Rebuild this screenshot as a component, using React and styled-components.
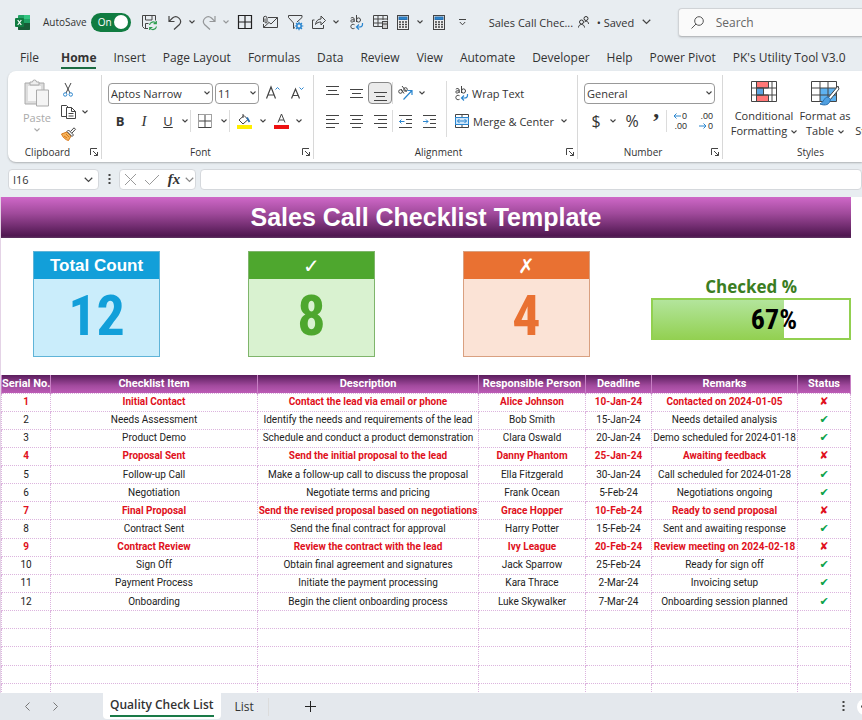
import React from 'react';
import styled, { createGlobalStyle } from 'styled-components';

const GlobalStyle = createGlobalStyle`
  * { box-sizing: border-box; }
  body {
    margin: 0;
    font-family: "Open Sans", "Noto Sans", sans-serif;
    font-size: 12px;
    color: #333;
    background: #e8edf1;
  }
  button, input, select { font: inherit; color: inherit; }
`;

const Page = styled.div`
  height: 100vh;
  display: flex;
  flex-direction: column;
  overflow: hidden;
`;
const Svg = styled.svg`
  display: block;
  flex: none;
  fill: none;
  stroke: ${props => props.$color || '#444'};
  stroke-width: 1;
  overflow: visible;
`;
const Tool = styled.button`
  width: ${props => props.$w || 24}px;
  height: ${props => props.$h || 24}px;
  flex: none;
  padding: 0;
  border: 0;
  background: none;
  display: flex;
  align-items: center;
  justify-content: center;
  &:disabled { opacity: .5; }
`;

/* title bar */
const TitleBar = styled.header`
  height: 44px;
  flex: none;
  display: flex;
  align-items: center;
  padding-left: 15px;
  white-space: nowrap;
`;
const AutoSave = styled.label`
  flex: none;
  display: flex;
  align-items: center;
  gap: 4px;
  margin-left: 13px;
  font-size: 10px;
`;
const Toggle = styled.span`
  width: 40px;
  height: 19px;
  border-radius: 10px;
  background: #107c41;
  color: #fff;
  display: flex;
  align-items: center;
  justify-content: space-between;
  padding: 0 3px 0 7px;
  input {
    appearance: none;
    width: 14px;
    height: 14px;
    margin: 0;
    border-radius: 50%;
    background: #fff;
  }
`;
const QuickAccess = styled.div`
  flex: none;
  display: flex;
  align-items: center;
  margin-left: 6px;
`;
const DocName = styled.div`
  width: 89px;
  flex: none;
  margin-left: 16px;
  font-size: 11px;
`;
const SavedButton = styled.button`
  width: 100px;
  flex: none;
  display: flex;
  align-items: center;
  gap: 8px;
  padding: 0;
  border: 0;
  background: none;
  font-size: 11px;
`;
const SearchBox = styled.label`
  flex: 1;
  min-width: 0;
  height: 29px;
  display: flex;
  align-items: center;
  gap: 12px;
  padding-left: 12px;
  background: #fafafa;
  border: 1px solid #d0d3d6;
  border-bottom-color: #b8bbbe;
  border-right: 0;
  border-radius: 4px 0 0 4px;
  box-shadow: 0 1px 2px rgba(0, 0, 0, .12);
  input {
    width: 100%;
    border: 0;
    background: none;
    padding: 0;
  }
  input::placeholder { color: #666; opacity: 1; }
`;

/* ribbon */
const Tabs = styled.nav`
  height: 27px;
  flex: none;
  display: flex;
  align-items: flex-end;
  gap: 17px;
  padding: 0 0 2px 20px;
  white-space: nowrap;
`;
const Tab = styled.a`
  color: #333;
  text-decoration: none;
  line-height: 18px;
  border-bottom: 2px solid ${props => props.$active ? '#1a6b41' : 'transparent'};
  font-weight: ${props => props.$active ? 700 : 400};
  &:first-child { margin-right: 5px; }
`;
const RibbonBody = styled.section`
  flex: none;
  height: 91px;
  margin-left: 8px;
  display: flex;
  background: #fff;
  border-radius: 8px 0 0 8px;
  box-shadow: 0 1px 2px rgba(0, 0, 0, .25);
  overflow: hidden;
`;
const Group = styled.div`
  flex: none;
  width: ${props => props.$w}px;
  display: flex;
  flex-direction: column;
  border-right: 1px solid #d8d8d8;
  margin: 4px 0 3px;
`;
const GroupBody = styled.div`
  flex: 1;
  display: flex;
  padding: ${props => props.$top}px 0 0 ${props => props.$left}px;
`;
const Rows = styled.div`
  display: flex;
  flex-direction: column;
  gap: 4px;
  ${props => props.$grow && 'flex: 1;'}
  ${props => props.$w && `width: ${props.$w}px; padding-left: 8px;`}
`;
const Row = styled.div`
  display: flex;
  align-items: center;
  height: 24px;
  white-space: nowrap;
`;
const GroupFooter = styled.div`
  display: flex;
  align-items: center;
  height: 14px;
  font-size: 10px;
  span { flex: 1; text-align: center; }
`;
const Divider = styled.div`
  width: 1px;
  flex: none;
  height: ${props => props.$h || 22}px;
  background: #dcdcdc;
`;
const SelectWrap = styled.div`
  position: relative;
  flex: none;
  width: ${props => props.$w}px;
  margin-right: 2px;
  select {
    display: block;
    appearance: none;
    width: 100%;
    height: 21px;
    padding: 0 2px;
    border: 1px solid #999;
    border-radius: 4px;
    background: #fff;
    font-size: 11px;
  }
  svg {
    position: absolute;
    right: 3px;
    top: 8px;
    pointer-events: none;
  }
`;
const Glyph = styled.span`
  font-size: ${props => props.$size || 13}px;
  font-weight: ${props => props.$bold ? 700 : 400};
  font-style: ${props => props.$italic ? 'italic' : 'normal'};
  font-family: ${props => props.$serif ? '"Liberation Serif", serif' : 'inherit'};
  text-decoration: ${props => props.$underline ? 'underline' : 'none'};
  line-height: 1;
`;
const AlignButton = styled(Tool)`
  height: 22px;
  border: 1px solid ${props => props.$on ? '#888' : 'transparent'};
  border-radius: 4px;
  background: ${props => props.$on ? '#ebebeb' : 'none'};
`;
const TextButton = styled.button`
  display: flex;
  align-items: center;
  gap: 4px;
  padding: 0;
  border: 0;
  background: none;
  font-size: 11px;
  height: 24px;
`;
const BigButton = styled.button`
  width: ${props => props.$w}px;
  flex: none;
  display: flex;
  flex-direction: column;
  align-items: center;
  gap: 3px;
  padding: 0;
  border: 0;
  background: none;
  font-size: 11px;
  line-height: 15px;
  color: ${props => props.$dim ? '#aaa' : '#333'};
  white-space: nowrap;
  span svg {
    display: inline-block;
    margin-left: 4px;
    vertical-align: middle;
  }
`;
const BigIcon = styled.div`
  height: 24px;
`;
const ClipboardTools = styled.div`
  display: flex;
  flex-direction: column;
`;
const ClipboardRow = styled.div`
  display: flex;
  align-items: center;
  height: 22px;
`;
const Digits = styled.span`
  display: grid;
  justify-items: end;
  font: 9px/10px "Liberation Sans", Arial, sans-serif;
  span { display: flex; align-items: center; gap: 1px; }
`;

/* formula bar */
const FormulaBar = styled.div`
  flex: none;
  height: 35px;
  display: flex;
  align-items: center;
  padding-left: 8px;
`;
const Field = styled.div`
  height: 21px;
  min-width: 0;
  flex: ${props => props.$w ? `0 0 ${props.$w}px` : 1};
  display: flex;
  align-items: center;
  background: #fff;
  border: 1px solid #d5d8dc;
  border-radius: 4px;
  margin-left: ${props => props.$w ? 0 : 4}px;
  input {
    flex: 1;
    width: 0;
    min-width: 0;
    border: 0;
    background: none;
    padding: 0 4px;
    font-size: 11px;
  }
`;

/* sheet */
const Sheet = styled.main`
  flex: 1;
  min-height: 0;
  overflow: hidden;
  background: #fff;
  border-left: 1px solid #e4d3e6;
  padding-right: 11px;
`;
const Banner = styled.h1`
  margin: 0;
  text-align: center;
  color: #fff;
  font: bold 25px/41px "Liberation Sans", Arial, sans-serif;
  background: linear-gradient(#cf68c8, #a04a9b 40%, #4f1750 95%, #5f3562);
`;
const Summary = styled.div`
  display: flex;
  justify-content: space-between;
  padding: 13px 0 18px 32px;
`;
const Cards = styled.div`
  display: flex;
  gap: 88px;
`;
const Card = styled.section`
  width: 127px;
  height: 106px;
  border: 1px solid ${props => props.$line};
  background: ${props => props.$fill};
  color: ${props => props.$color};
  text-align: center;
  h2 {
    margin: 0;
    height: 27px;
    background: ${props => props.$color};
    color: #fff;
    font: bold ${props => props.$mark ? 20 : 17}px/28px "Liberation Sans", "DejaVu Sans", sans-serif;
  }
  p {
    margin: 0;
    font: bold 56px/74px "Roboto Condensed", "Open Sans Condensed", Roboto, sans-serif;
  }
`;
const Checked = styled.section`
  width: 200px;
  padding-top: 24px;
  text-align: right;
  h2 {
    margin: 0;
    padding-right: 54px;
    color: #3a7d22;
    font: bold 17px/23px "Open Sans", sans-serif;
  }
`;
const Meter = styled.div`
  height: 42px;
  border: 2px solid #92d050;
  display: grid;
  > * { grid-area: 1 / 1; }
  span {
    padding-right: 52px;
    color: #000;
    font: bold 28px/40px "Roboto Condensed", "Open Sans Condensed", Roboto, sans-serif;
  }
`;
const MeterFill = styled.div`
  background: linear-gradient(#b3e59c, #92d050);
`;
const Table = styled.table`
  width: 100%;
  height: 327px;
  table-layout: fixed;
  border-collapse: collapse;
  font-family: Roboto, sans-serif;
  font-size: 10px;
  color: #222;
  text-align: center;
  th, td {
    height: 18px;
    padding: 0;
    line-height: 14px;
    white-space: nowrap;
    overflow: hidden;
    border: 1px dotted #dcb4de;
  }
  thead tr { background: linear-gradient(#5a1d5c, #a24a9e 60%, #bb5cb5); }
  th {
    color: #fff;
    font-size: 11px;
    font-weight: 700;
    border: 1px solid #c77fc4;
    border-width: 0 1px;
  }
`;
const ItemRow = styled.tr`
  color: ${props => props.$failed ? '#e01020' : '#222'};
  font-weight: ${props => props.$failed ? 700 : 400};
`;
const Mark = styled.span`
  font-family: "DejaVu Sans", sans-serif;
  font-size: 11px;
  color: ${props => props.$ok ? '#0ca24a' : '#e01020'};
`;

/* sheet tabs */
const SheetBar = styled.footer`
  flex: none;
  height: 27px;
  display: flex;
  align-items: center;
  padding-left: 13px;
  background: #e4e8ed;
`;
const SheetTabs = styled.div`
  align-self: flex-start;
  display: flex;
  margin-left: 34px;
`;
const SheetTab = styled.button`
  height: 26px;
  border: 0;
  border-radius: 0 0 4px 4px;
  background: ${props => props.$active ? '#fff' : 'none'};
  font-weight: ${props => props.$active ? 600 : 400};
  padding: ${props => props.$active ? '0 7px' : '4px 14px 0'};
  line-height: 20px;
  white-space: nowrap;
  span {
    display: block;
    border-bottom: 2px solid ${props => props.$active ? '#1a7a48' : 'transparent'};
  }
`;
const Spacer = styled.div`
  flex: 1;
`;
const ScrollKnob = styled.button`
  width: 16px;
  height: 16px;
  margin-right: -11px;
  border: 0;
  border-radius: 50%;
  background: #fff;
  padding: 0 0 0 4px;
`;

const Chevron = ({ size = 6, color }) => (
  <Svg width={size} height={size === 6 ? 4 : 6} viewBox="0 0 6 4" $color={color}><path d="M.5 .5 3 3 5.5 .5" strokeWidth={size === 6 ? 1.1 : .8} /></Svg>
);
const Drop = ({ w = 10, label, ...rest }) => (
  <Tool $w={w} aria-label={label} {...rest}><Chevron /></Tool>
);
const Launcher = ({ label }) => (
  <Tool $w={14} $h={14} aria-label={label}>
    <Svg width="8" height="8" viewBox="0 0 8 8"><path d="M.5 7V.5H7M3 3l4.500 4.500M7.500 4v3.500H4" /></Svg>
  </Tool>
);
const ExcelLogo = () => (
  <Svg width="15" height="15" viewBox="0 0 15 15">
    <g stroke="none">
      <rect x="3" y="0" width="12" height="15" rx="1" fill="#21a366" />
      <path d="M9 0h5a1 1 0 0 1 1 1v3H9z" fill="#33c481" />
      <path d="M3 4h6v4H3z" fill="#107c41" />
      <path d="M3 8h12v6a1 1 0 0 1-1 1H4a1 1 0 0 1-1-1z" fill="#185c37" />
      <rect x="0" y="3" width="9" height="9" rx="1" fill="#107c41" />
    </g>
    <path d="m2.700 5 3.600 5M6.300 5l-3.600 5" stroke="#fff" strokeWidth="1.200" />
  </Svg>
);
const SaveIcon = () => (
  <Svg width="15" height="15" viewBox="0 0 15 15">
    <path d="M6 13.500H2.500l-2-2V.5h13v5M3.500 .5v4.500h6.500V.5M3.500 13V8.500h3" />
    <path d="M7.500 10a3.600 3.600 0 0 1 6.500-1.500M14.300 6v2.700h-2.700M14.500 11.500A3.600 3.600 0 0 1 8 13M7.700 15v-2.500h2.700" stroke="#2e9e4f" strokeWidth="1.200" />
  </Svg>
);
const UndoIcon = () => (
  <Svg width="14" height="15" viewBox="0 0 14 15"><path d="M1 1v5.500h5.500M1.200 6.300 4.500 3a4.800 4.800 0 0 1 7 6.500L6 14.500" strokeWidth="1.200" /></Svg>
);
const RedoIcon = () => (
  <Svg width="14" height="15" viewBox="0 0 14 15"><path d="M13 1v5.500H7.500M12.800 6.300 9.500 3a4.800 4.800 0 0 0-7 6.500L8 14.500" strokeWidth="1.200" /></Svg>
);
const BordersAllIcon = () => (
  <Svg width="14" height="14" viewBox="0 0 14 14" $color="#222"><path d="M.5 .5h13v13H.5zM7 .5v13M.5 7h13" strokeWidth="1.200" /></Svg>
);
const MailIcon = () => (
  <Svg width="15" height="12" viewBox="0 0 15 12"><path d="M5 1.500h9.500v10H.5V8M14.500 1.500 8 8 5.500 6M.5 6V2a1.700 1.700 0 0 1 3.500 0v4a1 1 0 0 1-2 0V2.500M.5 11.500 6 6.500" /></Svg>
);
const FilterIcon = () => (
  <Svg width="15" height="15" viewBox="0 0 15 15">
    <path d="M.5 .5h13.500v2L9 7M.5 .5v2L5.500 8v5.500L7 12.500" />
    <path d="M11 6.700v8.600M6.700 11h8.600M8 8l6 6M14 8l-6 6" stroke="#2b86cf" strokeWidth="1.200" />
    <circle cx="11" cy="11" r="2.200" fill="#e8edf1" stroke="#2b86cf" strokeWidth="1.500" />
  </Svg>
);
const ShareIcon = () => (
  <Svg width="14" height="14" viewBox="0 0 14 14"><path d="M2.500 5H.5v8.500h11V10M3.500 9.500C4 6 6 4 9 4V1l4.500 4.500L9 10V7C7 7 5 7.500 3.500 9.500z" /></Svg>
);
const AbcIcon = () => (
  <Svg width="13" height="15" viewBox="0 0 13 15">
    <path d="M.8 3.200C2 2 4.200 2.500 4.200 4v3M4.200 5C2.500 4.500.7 4.800.7 6c0 1.400 2.500 1.400 3.500-.2M6.500 0v7" />
    <ellipse cx="8.500" cy="5" rx="2" ry="2.100" />
    <path d="M4.500 9.700C3 8.800.8 9.500.8 11.500s2.200 2.700 3.700 1.800" />
    <path d="M12.500 8v1.500c0 2-1 2.500-3 2.500H6.500M9 9.500 6.500 12 9 14.500" stroke="#2b86cf" strokeWidth="1.200" />
  </Svg>
);
const TableCalcIcon = () => (
  <Svg width="15" height="14" viewBox="0 0 15 14">
    <path d="M9 11.500H.5V.5h14v5M.5 4h14M.5 8H9M5 .5v11M10 .5V5" />
    <rect x="9.500" y="6.500" width="5" height="7" fill="#ccc" /><path d="M10 9h4" />
  </Svg>
);
const CalcIcon = () => (
  <Svg width="12" height="15" viewBox="0 0 12 15">
    <rect x=".5" y=".5" width="11" height="14" fill="#eee" />
    <rect x="2" y="2" width="8" height="2.500" fill="#2b86cf" stroke="#2b6fae" />
    <path d="M2 7h2M5 7h2M8 7h2M2 9.500h2M5 9.500h2M8 9.500h2M2 12h2M5 12h2M8 12h2" strokeWidth="1.500" />
  </Svg>
);
const CustomizeIcon = () => (
  <Svg width="7" height="7" viewBox="0 0 7 7"><path d="M0 .5h7M.8 3 3.500 5.800 6.200 3" /></Svg>
);
const PeopleIcon = () => (
  <Svg width="11" height="12" viewBox="0 0 11 12" $color="#333">
    <circle cx="3.500" cy="6" r="2" /><path d="M.5 11.500c0-4 6-4 6 0" /><circle cx="8" cy="2.500" r="2" /><path d="M6.500 6c2-1.500 4-.5 4 2" />
  </Svg>
);
const SearchIcon = () => (
  <Svg width="13" height="13" viewBox="0 0 13 13" $color="#555"><circle cx="8" cy="5" r="4.300" /><path d="M5 8 .5 12.500" /></Svg>
);
const PasteIcon = () => (
  <Svg width="26" height="28" viewBox="0 0 26 28" $color="#aaa">
    <path d="M1 4h19v21H1z" fill="#ddd" /><path d="M4 7h13v15H4z" fill="#f7f7f7" stroke="none" />
    <path d="M6 6V3h2.500a2 2 0 0 1 4 0H15v3z" fill="#eee" />
    <path d="M12.500 11h12v16h-12z" fill="#f4f4f4" />
  </Svg>
);
const CutIcon = () => (
  <Svg width="10" height="14" viewBox="0 0 10 14">
    <path d="M2 0l5 10M8 0 3 10" /><circle cx="2.200" cy="11.500" r="1.700" stroke="#2b86cf" /><circle cx="7.800" cy="11.500" r="1.700" stroke="#2b86cf" />
  </Svg>
);
const CopyIcon = () => (
  <Svg width="15" height="14" viewBox="0 0 15 14">
    <path d="M5 11.500H.5V.5h5L8 3M5.500 2.500h5l4 4v7h-9zM10.500 2.500v4h4M7.500 8.500h5M7.500 11h5" />
  </Svg>
);
const BrushIcon = () => (
  <Svg width="15" height="14" viewBox="0 0 15 14">
    <path d="M.5 7 6 5l4 4-2.500 4.500C5 13 2 11 .5 7z" fill="#f5b35c" stroke="#d9791a" /><path d="m3 9 3 2M5 7l3 3" stroke="#d9791a" />
    <path d="m6 4.500 1.500-1.500 5 5L11 9.500zM9.500 4.500 13 .8l1.500 1.500L11 6" fill="#fff" />
  </Svg>
);
const BorderIcon = () => (
  <Svg width="14" height="14" viewBox="0 0 14 14"><path d="M.5 .5h13v13M.5 .5v13" strokeDasharray="1 1" /><path d="M.5 13.500h13M7 1v12M1 7h12" /></Svg>
);
const FillIcon = () => (
  <Svg width="16" height="15" viewBox="0 0 16 15">
    <path d="M7 0v4M3 6 8 1.500l4 4-5 4.500z" /><path d="m11 3.500 2.500 4.500" stroke="#2b6fae" strokeWidth="1.800" /><path d="M1 13h15" stroke="#ffee00" strokeWidth="4" />
  </Svg>
);
const FontColorIcon = () => (
  <Svg width="15" height="15" viewBox="0 0 15 15"><path d="M4 8.500 7.500 0 11 8.500M5 6h5" /><path d="M0 13h15" stroke="#e11" strokeWidth="4" /></Svg>
);
const FontSizeIcon = ({ up }) => (
  <Svg width="14" height="14" viewBox="0 0 14 14">
    <path d={up ? 'M.5 12.500 5 1l4.500 11.500M2 9h6' : 'M1.500 12.500 5.500 3l4 9.500M3 9.500h5'} strokeWidth="1.200" />
    <path d={up ? 'm9.500 3.500 2-2 2 2' : 'm9.500 1.500 2 2 2-2'} stroke="#2b86cf" />
  </Svg>
);
const lineSets = {
  top: 'M0 .5h13M2 4.500h9M0 8.500h13',
  middle: 'M0 3.500h13M2 7.500h9M0 11.500h13',
  bottom: 'M0 6.500h13M2 10.500h9M0 14.500h13',
  left: 'M0 1.500h13M0 5.500h9M0 9.500h13M0 13.500h9',
  center: 'M0 1.500h13M2 5.500h9M0 9.500h13M2 13.500h9',
  right: 'M0 1.500h13M4 5.500h9M0 9.500h13M4 13.500h9',
};
const LinesIcon = ({ kind }) => (
  <Svg width="13" height="15" viewBox="0 0 13 15"><path d={lineSets[kind]} /></Svg>
);
const IndentIcon = ({ out }) => (
  <Svg width="13" height="15" viewBox="0 0 13 15">
    <path d="M0 1.500h13M7 5.500h6M7 9.500h6M0 13.500h13" />
    <path d={out ? 'M5.500 7.500h-5M2.500 5.500l-2 2 2 2' : 'M0 7.500h5M3 5.500l2 2-2 2'} stroke="#2b86cf" />
  </Svg>
);
const OrientationIcon = () => (
  <Svg width="15" height="14" viewBox="0 0 15 14">
    <circle cx="2.500" cy="5.500" r="1.800" /><path d="m3 3 3 4.500M4 0l4.500 5.500" /><circle cx="7.500" cy="3.500" r="1.800" />
    <path d="M5.500 13.500 14 4.500M9.500 4.500H14V9" stroke="#2b86cf" strokeWidth="1.200" />
  </Svg>
);
const MergeIcon = () => (
  <Svg width="14" height="14" viewBox="0 0 14 14">
    <path d="M.5 .5h13v13H.5zM7 .5v3M7 10.500v3" /><rect x=".5" y="3.500" width="13" height="7" fill="#cfe6fa" stroke="#2b86cf" />
    <path d="M2.500 7h9M4.500 5l-2 2 2 2M9.500 5l2 2-2 2" stroke="#2b86cf" />
  </Svg>
);
const DecimalArrow = ({ right }) => (
  <Svg width="8" height="6" viewBox="0 0 8 6" $color="#2b86cf"><path d={right ? 'M0 3h7M4.500 .5 7 3 4.500 5.500' : 'M8 3H1M3.500 .5 1 3l2.500 2.500'} /></Svg>
);
const CondIcon = () => (
  <Svg width="26" height="21" viewBox="0 0 26 21">
    <path d="M5.500 .5h12v6.500h-12zM5.500 14h12v6.500h-12z" fill="#f77" /><path d="M5.500 7h7v7h-7z" fill="#5ba3e0" />
    <path d="M.5 .5h25v20H.5zM.5 7h25M.5 14h25M5.500 .5v20M21 .5v20" />
  </Svg>
);
const FormatTableIcon = () => (
  <Svg width="28" height="25" viewBox="0 0 28 25">
    <path d="M9 7h17v13H9z" fill="#5fb2f0" stroke="none" />
    <path d="M.5 .5h25v20H.5zM.5 7h25M.5 14h25M9 .5v20M17 .5v20" />
    <path d="M27 5 17 17l2 2L28 8z" fill="#fff" /><path d="M17 16c-4 0-4 5-8 7 5 2 10 1 10.500-5z" fill="#4f9fe0" stroke="#2b6fae" />
  </Svg>
);
const CellStylesIcon = () => (
  <Svg width="26" height="21" viewBox="0 0 26 21"><path d="M.5 .5h25v20H.5zM.5 7h25M.5 14h25M9 .5v20M17 .5v20" /></Svg>
);
const Dots = () => (
  <Svg width="3" height="11" viewBox="0 0 3 11"><path d="M1.500 0v2M1.500 4v2M1.500 8v2" strokeWidth="2" /></Svg>
);

const tabs = ['File', 'Home', 'Insert', 'Page Layout', 'Formulas', 'Data', 'Review', 'View', 'Automate', 'Developer', 'Help', 'Power Pivot', "PK's Utility Tool V3.0"];

const columns = [
  { title: 'Serial No.', w: 49 },
  { title: 'Checklist Item', w: 207 },
  { title: 'Description' },
  { title: 'Responsible Person', w: 107 },
  { title: 'Deadline', w: 66 },
  { title: 'Remarks', w: 146 },
  { title: 'Status', w: 53 },
];

const items = [
  ['Initial Contact', 'Contact the lead via email or phone', 'Alice Johnson', '10-Jan-24', 'Contacted on 2024-01-05', false],
  ['Needs Assessment', 'Identify the needs and requirements of the lead', 'Bob Smith', '15-Jan-24', 'Needs detailed analysis', true],
  ['Product Demo', 'Schedule and conduct a product demonstration', 'Clara Oswald', '20-Jan-24', 'Demo scheduled for 2024-01-18', true],
  ['Proposal Sent', 'Send the initial proposal to the lead', 'Danny Phantom', '25-Jan-24', 'Awaiting feedback', false],
  ['Follow-up Call', 'Make a follow-up call to discuss the proposal', 'Ella Fitzgerald', '30-Jan-24', 'Call scheduled for 2024-01-28', true],
  ['Negotiation', 'Negotiate terms and pricing', 'Frank Ocean', '5-Feb-24', 'Negotiations ongoing', true],
  ['Final Proposal', 'Send the revised proposal based on negotiations', 'Grace Hopper', '10-Feb-24', 'Ready to send proposal', false],
  ['Contract Sent', 'Send the final contract for approval', 'Harry Potter', '15-Feb-24', 'Sent and awaiting response', true],
  ['Contract Review', 'Review the contract with the lead', 'Ivy League', '20-Feb-24', 'Review meeting on 2024-02-18', false],
  ['Sign Off', 'Obtain final agreement and signatures', 'Jack Sparrow', '25-Feb-24', 'Ready for sign off', true],
  ['Payment Process', 'Initiate the payment processing', 'Kara Thrace', '2-Mar-24', 'Invoicing setup', true],
  ['Onboarding', 'Begin the client onboarding process', 'Luke Skywalker', '7-Mar-24', 'Onboarding session planned', true],
];

const Select = ({ w, label, value }) => (
  <SelectWrap $w={w}>
    <select aria-label={label} defaultValue={value}><option>{value}</option></select>
    <Chevron />
  </SelectWrap>
);

const RibbonGroup = ({ name, w, top = 6, left = 6, plain, children }) => (
  <Group $w={w}>
    <GroupBody $top={top} $left={left}>{children}</GroupBody>
    <GroupFooter>
      <span>{name}</span>
      {!plain && <Launcher label={`${name} settings`} />}
    </GroupFooter>
  </Group>
);

const Header = () => (
  <TitleBar>
    <ExcelLogo />
    <AutoSave>
      <span>AutoSave</span>
      <Toggle>On<input type="checkbox" defaultChecked /></Toggle>
    </AutoSave>
    <QuickAccess>
      <Tool $w={26} aria-label="Save"><SaveIcon /></Tool>
      <Tool aria-label="Undo"><UndoIcon /></Tool>
      <Drop label="Undo list" />
      <Tool aria-label="Redo" disabled><RedoIcon /></Tool>
      <Drop label="Redo list" disabled />
      <Tool $w={28} aria-label="All borders"><BordersAllIcon /></Tool>
      <Tool aria-label="Email"><MailIcon /></Tool>
      <Tool $w={26} aria-label="Filter"><FilterIcon /></Tool>
      <Tool $w={20} aria-label="Share"><ShareIcon /></Tool>
      <Drop w={14} label="Share options" />
      <Tool $w={28} aria-label="Wrap"><AbcIcon /></Tool>
      <Tool $w={20} aria-label="Calculate sheet"><TableCalcIcon /></Tool>
      <Tool aria-label="Calculate"><CalcIcon /></Tool>
      <Drop label="Calculation options" />
      <Tool $w={28} aria-label="Calculate now"><CalcIcon /></Tool>
      <Tool $w={20} aria-label="Customize"><CustomizeIcon /></Tool>
    </QuickAccess>
    <DocName>Sales Call Chec...</DocName>
    <SavedButton>
      <PeopleIcon />
      <span>• Saved</span>
      <Chevron size={9} />
    </SavedButton>
    <SearchBox>
      <SearchIcon />
      <input type="text" placeholder="Search" aria-label="Search" />
    </SearchBox>
  </TitleBar>
);

const Ribbon = () => (
  <RibbonBody>
    <RibbonGroup name="Clipboard" w={94} top={4} left={8}>
      <BigButton $w={42} $dim>
        <PasteIcon />
        <span>Paste</span>
        <Chevron color="#aaa" />
      </BigButton>
      <ClipboardTools>
        <ClipboardRow><Tool $w={20} $h={20} aria-label="Cut"><CutIcon /></Tool></ClipboardRow>
        <ClipboardRow><Tool $w={20} $h={20} aria-label="Copy"><CopyIcon /></Tool><Drop w={14} label="Copy options" /></ClipboardRow>
        <ClipboardRow><Tool $w={20} $h={20} aria-label="Format painter"><BrushIcon /></Tool></ClipboardRow>
      </ClipboardTools>
    </RibbonGroup>
    <RibbonGroup name="Font" w={212}>
      <Rows>
        <Row>
          <Select w={105} label="Font" value="Aptos Narrow" />
          <Select w={44} label="Font size" value="11" />
          <Tool aria-label="Increase font size"><FontSizeIcon up /></Tool>
          <Tool aria-label="Decrease font size"><FontSizeIcon /></Tool>
        </Row>
        <Row>
          <Tool aria-label="Bold"><Glyph $bold>B</Glyph></Tool>
          <Tool aria-label="Italic"><Glyph $italic $serif $size={15}>I</Glyph></Tool>
          <Tool aria-label="Underline"><Glyph $underline>U</Glyph></Tool>
          <Drop label="Underline style" />
          <Divider />
          <Tool $w={28} aria-label="Borders"><BorderIcon /></Tool>
          <Drop label="Border style" />
          <Divider />
          <Tool $w={28} aria-label="Fill color"><FillIcon /></Tool>
          <Drop label="Fill colors" />
          <Tool $w={26} aria-label="Font color"><FontColorIcon /></Tool>
          <Drop label="Font colors" />
        </Row>
      </Rows>
    </RibbonGroup>
    <RibbonGroup name="Alignment" w={264}>
      <Rows $grow>
        <Row>
          <AlignButton aria-label="Top align"><LinesIcon kind="top" /></AlignButton>
          <AlignButton aria-label="Middle align"><LinesIcon kind="middle" /></AlignButton>
          <AlignButton $on aria-label="Bottom align"><LinesIcon kind="bottom" /></AlignButton>
          <Divider />
          <Tool aria-label="Orientation"><OrientationIcon /></Tool>
          <Drop label="Orientation options" />
        </Row>
        <Row>
          <AlignButton aria-label="Align left"><LinesIcon kind="left" /></AlignButton>
          <AlignButton aria-label="Center"><LinesIcon kind="center" /></AlignButton>
          <AlignButton aria-label="Align right"><LinesIcon kind="right" /></AlignButton>
          <Divider />
          <Tool aria-label="Decrease indent"><IndentIcon out /></Tool>
          <Tool aria-label="Increase indent"><IndentIcon /></Tool>
        </Row>
      </Rows>
      <Divider $h={56} />
      <Rows $w={130}>
        <Row><TextButton><AbcIcon />Wrap Text</TextButton></Row>
        <Row><TextButton><MergeIcon />Merge &amp; Center</TextButton><Drop w={20} label="Merge options" /></Row>
      </Rows>
    </RibbonGroup>
    <RibbonGroup name="Number" w={145}>
      <Rows>
        <Row><Select w={131} label="Number format" value="General" /></Row>
        <Row>
          <Tool aria-label="Currency"><Glyph $size={16}>$</Glyph></Tool>
          <Drop label="Currency options" />
          <Tool $w={28} aria-label="Percent"><Glyph $size={16}>%</Glyph></Tool>
          <Tool $w={20} aria-label="Comma"><Glyph $size={24} $bold $serif>’</Glyph></Tool>
          <Divider />
          <Tool $w={26} aria-label="Increase decimal"><Digits><span><DecimalArrow />0</span><span>.00</span></Digits></Tool>
          <Tool $w={26} aria-label="Decrease decimal"><Digits><span>.00</span><span><DecimalArrow right />0</span></Digits></Tool>
        </Row>
      </Rows>
    </RibbonGroup>
    <RibbonGroup name="Styles" w={176} left={8} plain>
      <BigButton $w={66}><BigIcon><CondIcon /></BigIcon><span>Conditional<br />Formatting<Chevron /></span></BigButton>
      <BigButton $w={56}><BigIcon><FormatTableIcon /></BigIcon><span>Format as<br />Table<Chevron /></span></BigButton>
      <BigButton $w={44}><BigIcon><CellStylesIcon /></BigIcon><span>Cell<br />Styles<Chevron /></span></BigButton>
    </RibbonGroup>
  </RibbonBody>
);

export default function App() {
  const passed = items.filter(item => item[5]).length;
  const percent = Math.round(passed / items.length * 100);

  return (
    <Page>
      <GlobalStyle />
      <Header />
      <Tabs>
        {tabs.map(name => <Tab key={name} href="#" $active={name === 'Home'}>{name}</Tab>)}
      </Tabs>
      <Ribbon />
      <FormulaBar>
        <Field $w={91}>
          <input aria-label="Name box" defaultValue="I16" />
          <Tool $w={20} $h={18} aria-label="Names"><Chevron size={9} /></Tool>
        </Field>
        <Tool $w={20} $h={20} aria-label="Resize"><Dots /></Tool>
        <Field $w={77}>
          <Tool $w={20} $h={18} aria-label="Cancel"><Svg width="11" height="11" viewBox="0 0 11 11" $color="#999"><path d="m0 0 11 11M11 0 0 11" /></Svg></Tool>
          <Tool $h={18} aria-label="Enter"><Svg width="14" height="10" viewBox="0 0 14 10" $color="#999"><path d="m0 5 4.500 4.500L14 0" /></Svg></Tool>
          <Tool $w={20} $h={18} aria-label="Insert function"><Glyph $italic $serif $bold $size={15}>fx</Glyph></Tool>
          <Tool $w={10} $h={18} aria-label="Function list"><Chevron size={9} color="#888" /></Tool>
        </Field>
        <Field><input aria-label="Formula" /></Field>
      </FormulaBar>
      <Sheet>
        <Banner>Sales Call Checklist Template</Banner>
        <Summary>
          <Cards>
            <Card $color="#129fd9" $fill="#caedfb" $line="#5fb4d8"><h2>Total Count</h2><p>{items.length}</p></Card>
            <Card $mark $color="#4ea72e" $fill="#d9f2d0" $line="#7fb56b"><h2>✓</h2><p>{passed}</p></Card>
            <Card $mark $color="#e97132" $fill="#fbe3d6" $line="#d9a080"><h2>✗</h2><p>{items.length - passed}</p></Card>
          </Cards>
          <Checked>
            <h2>Checked %</h2>
            <Meter>
              <MeterFill style={{ width: `${percent}%` }} />
              <span>{percent}%</span>
            </Meter>
          </Checked>
        </Summary>
        <Table>
          <colgroup>{columns.map(col => <col key={col.title} width={col.w} />)}</colgroup>
          <thead>
            <tr>{columns.map(col => <th key={col.title}>{col.title}</th>)}</tr>
          </thead>
          <tbody>
            {items.map(([name, text, person, deadline, remarks, ok], i) => (
              <ItemRow key={name} $failed={!ok}>
                <td>{i + 1}</td>
                <td>{name}</td>
                <td>{text}</td>
                <td>{person}</td>
                <td>{deadline}</td>
                <td>{remarks}</td>
                <td><Mark $ok={ok}>{ok ? '✔' : '✘'}</Mark></td>
              </ItemRow>
            ))}
            {[...Array(5)].map((_, i) => (
              <tr key={i}>{columns.map(col => <td key={col.title} />)}</tr>
            ))}
          </tbody>
        </Table>
      </Sheet>
      <SheetBar>
        <Tool $w={28} aria-label="Previous sheet"><Svg width="5" height="9" viewBox="0 0 5 9" $color="#777"><path d="M4.500 .5.5 4.500l4 4" /></Svg></Tool>
        <Tool $w={28} aria-label="Next sheet"><Svg width="5" height="9" viewBox="0 0 5 9" $color="#777"><path d="m.5 .5 4 4-4 4" /></Svg></Tool>
        <SheetTabs>
          <SheetTab $active><span>Quality Check List</span></SheetTab>
          <SheetTab><span>List</span></SheetTab>
        </SheetTabs>
        <Divider $h={18} />
        <Tool $w={84} aria-label="New sheet"><Svg width="11" height="11" viewBox="0 0 11 11" $color="#222"><path d="M5.500 0v11M0 5.500h11" /></Svg></Tool>
        <Spacer />
        <Tool $w={28} aria-label="More"><Dots /></Tool>
        <ScrollKnob aria-label="Scroll left"><Svg width="5" height="7" viewBox="0 0 5 7"><path d="M4 0 0 3.500 4 7z" fill="#444" /></Svg></ScrollKnob>
      </SheetBar>
    </Page>
  );
}
